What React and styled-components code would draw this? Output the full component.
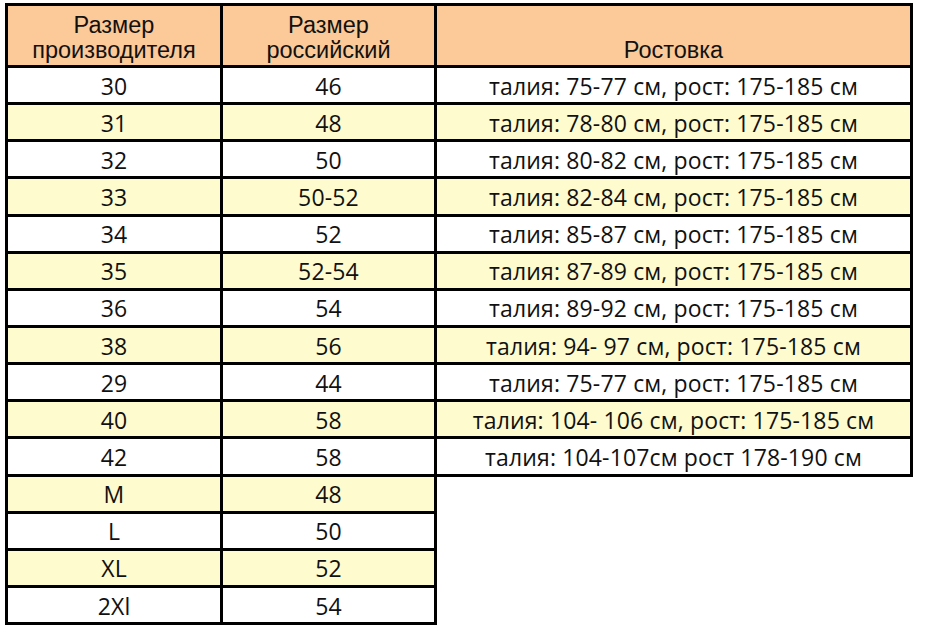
import React from "react";
import styled, { createGlobalStyle } from "styled-components";

const Global = createGlobalStyle`
  html, body { margin: 0; padding: 0; background: #ffffff; }
`;

const Page = styled.div`
  padding: 3px 0 0 5px;
`;

const Table = styled.table`
  border-collapse: collapse;
  table-layout: fixed;
  width: 905px;
`;

const HeadRow = styled.tr`
  height: 62px;
`;

const HeadCell = styled.th`
  background: #fcc998;
  border: 3px solid #000;
  padding: 0 2px 2px;
  font-family: "Liberation Sans", Arial, sans-serif;
  font-weight: normal;
  font-size: 23.5px;
  line-height: 25px;
  color: #111;
  text-align: center;
  vertical-align: bottom;
`;

const Row = styled.tr`
  height: 37.15px;
  background: ${(p) => (p.$alt ? "#fefbcf" : "#ffffff")};
`;

const Cell = styled.td`
  border: 3px solid #000;
  padding: 1px 2px 0;
  font-family: "Open Sans", "Noto Sans", sans-serif;
  font-size: 23px;
  line-height: 28px;
  letter-spacing: 0.15px;
  color: #111;
  text-align: center;
  vertical-align: middle;
  white-space: nowrap;
`;

const EmptyCell = styled.td`
  border: none;
  background: #ffffff;
`;

const rows = [
  ["30", "46", "талия: 75-77 см, рост: 175-185 см"],
  ["31", "48", "талия: 78-80 см, рост: 175-185 см"],
  ["32", "50", "талия: 80-82 см, рост: 175-185 см"],
  ["33", "50-52", "талия: 82-84 см, рост: 175-185 см"],
  ["34", "52", "талия: 85-87 см, рост: 175-185 см"],
  ["35", "52-54", "талия: 87-89 см, рост: 175-185 см"],
  ["36", "54", "талия: 89-92 см, рост: 175-185 см"],
  ["38", "56", "талия: 94- 97 см, рост: 175-185 см"],
  ["29", "44", "талия: 75-77 см, рост: 175-185 см"],
  ["40", "58", "талия: 104- 106 см, рост: 175-185 см"],
  ["42", "58", "талия: 104-107см рост 178-190 см"],
  ["M", "48", null],
  ["L", "50", null],
  ["XL", "52", null],
  ["2Xl", "54", null],
];

export default function App() {
  return (
    <>
      <Global />
      <Page>
        <Table>
          <colgroup>
            <col style={{ width: "215px" }} />
            <col style={{ width: "214px" }} />
            <col style={{ width: "476px" }} />
          </colgroup>
          <thead>
            <HeadRow>
              <HeadCell>
                Размер
                <br />
                производителя
              </HeadCell>
              <HeadCell>
                Размер
                <br />
                российский
              </HeadCell>
              <HeadCell>Ростовка</HeadCell>
            </HeadRow>
          </thead>
          <tbody>
            {rows.map((r, i) => (
              <Row key={i} $alt={i % 2 === 1}>
                <Cell>{r[0]}</Cell>
                <Cell>{r[1]}</Cell>
                {r[2] ? <Cell>{r[2]}</Cell> : <EmptyCell />}
              </Row>
            ))}
          </tbody>
        </Table>
      </Page>
    </>
  );
}
